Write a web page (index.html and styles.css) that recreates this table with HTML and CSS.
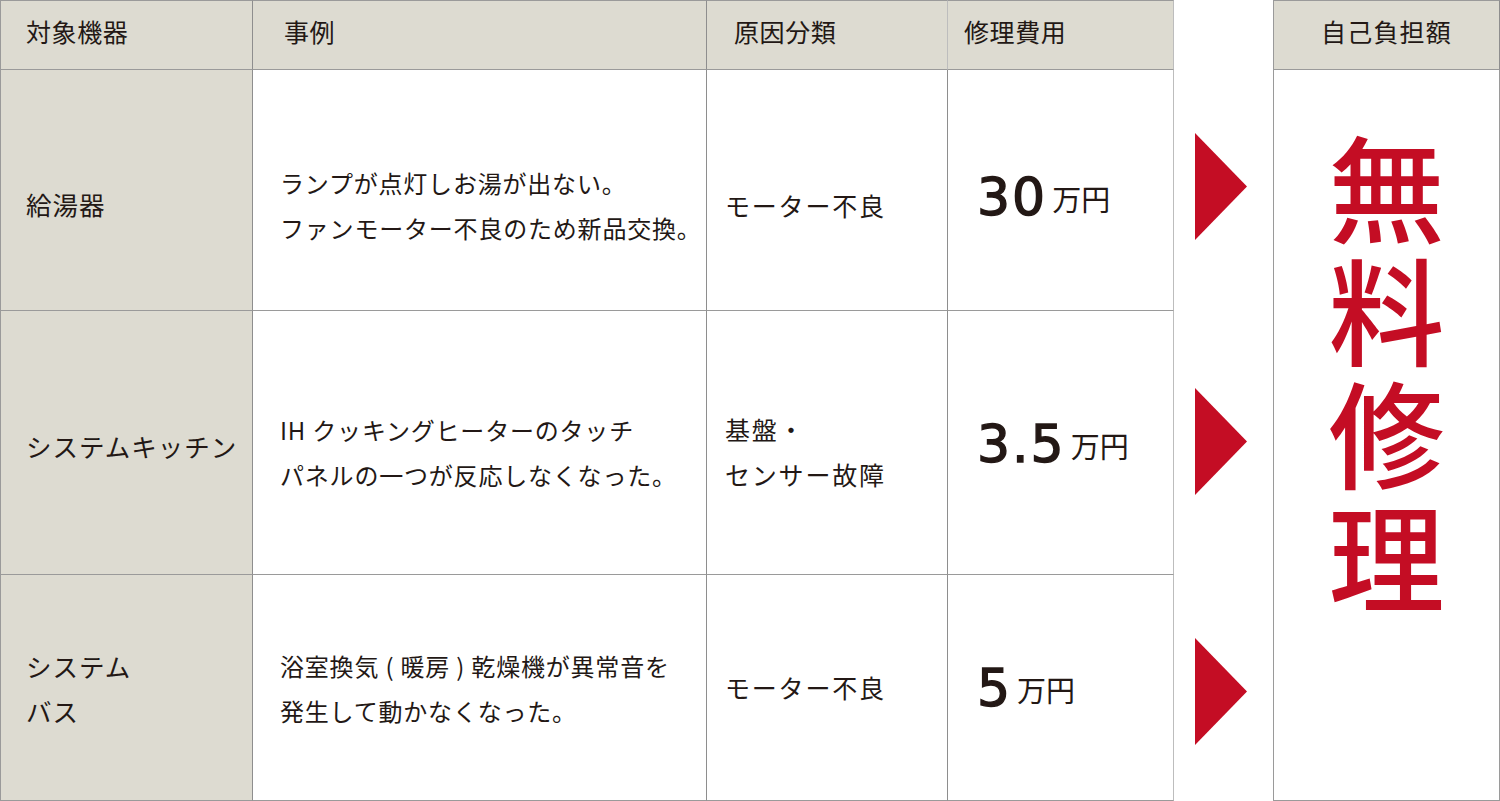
FILE: index.html
```html
<!DOCTYPE html>
<html lang="ja">
<head>
<meta charset="utf-8">
<title>修理事例</title>
<link rel="stylesheet" href="styles.css">
</head>
<body>
<div class="board">
  <div class="cell head c1 first top">対象機器</div>
  <div class="cell head c2 top">事例</div>
  <div class="cell head c3 top">原因分類</div>
  <div class="cell head c4 top light">修理費用</div>
  <div class="gapcol"></div>
  <div class="cell head pay top">自己負担額</div>

  <div class="cell item first r1">給湯器</div>
  <div class="cell desc r1"><p>ランプが点灯しお湯が出ない。</p><p>ファンモーター不良のため新品交換。</p></div>
  <div class="cell cause r1">モーター不良</div>
  <div class="cell cost light r1"><span class="num">30</span><span class="unit">万円</span></div>
  <div class="arrow r1"><svg width="52" height="107" viewBox="0 0 52 107"><polygon points="0,0 52,53.5 0,107" fill="#c40d24"/></svg></div>

  <div class="free"><div class="free-text">無<br>料<br>修<br>理</div></div>

  <div class="cell item first r2">システムキッチン</div>
  <div class="cell desc r2"><p>IH クッキングヒーターのタッチ</p><p>パネルの一つが反応しなくなった。</p></div>
  <div class="cell cause r2"><p>基盤・</p><p>センサー故障</p></div>
  <div class="cell cost light r2"><span class="num">3.5</span><span class="unit">万円</span></div>
  <div class="arrow r2"><svg width="52" height="107" viewBox="0 0 52 107"><polygon points="0,0 52,53.5 0,107" fill="#c40d24"/></svg></div>

  <div class="cell item first r3"><p>システム</p><p>バス</p></div>
  <div class="cell desc r3"><p>浴室換気 ( 暖房 ) 乾燥機が異常音を</p><p>発生して動かなくなった。</p></div>
  <div class="cell cause r3">モーター不良</div>
  <div class="cell cost light r3"><span class="num">5</span><span class="unit">万円</span></div>
  <div class="arrow r3"><svg width="52" height="107" viewBox="0 0 52 107"><polygon points="0,0 52,53.5 0,107" fill="#c40d24"/></svg></div>
</div>
</body>
</html>
```

FILE: styles.css
```css
html, body {
  margin: 0;
  padding: 0;
  background: #ffffff;
}
body {
  font-family: "Noto Sans CJK JP", "Noto Sans", sans-serif;
  color: #231815;
  width: 1500px;
  height: 801px;
  overflow: hidden;
}
p { margin: 0; white-space: nowrap; }

.board {
  display: grid;
  grid-template-columns: 253px 454px 241px 226px 99px 227px;
  grid-template-rows: 70px 241px 264px 226px;
}

.cell {
  box-sizing: border-box;
  border-right: 1px solid #8e8e8e;
  border-bottom: 1px solid #9a9a9a;
  display: flex;
  flex-direction: column;
  justify-content: center;
  white-space: nowrap;
}
.cell.first { border-left: 1px solid #9a9a9a; }
.cell.top { border-top: 1px solid #9a9a9a; }
.cell.light { border-right-color: #bdbdbd; }
.c3 { border-right-color: #bdbdbd; }

.head {
  background: #dddbd1;
  font-size: 25px;
  line-height: 30px;
  padding-bottom: 9px;
  letter-spacing: 0.6px;
}
.c1 { padding-left: 25px; }
.c2 { padding-left: 31px; }
.c3 { padding-left: 27px; }
.c4 { padding-left: 16px; }
.pay {
  border-left: 1px solid #9a9a9a;
  align-items: center;
  padding-left: 0;
  padding-right: 0;
  letter-spacing: 1.2px;
}

.item {
  background: #dddbd1;
  padding-left: 25px;
  font-size: 25.5px;
  line-height: 45px;
  letter-spacing: 1px;
}
.desc {
  padding-left: 27px;
  font-size: 24px;
  line-height: 45px;
  letter-spacing: 0.8px;
}
.cause {
  padding-left: 18px;
  font-size: 25px;
  line-height: 45px;
  letter-spacing: 1.8px;
}
.cost {
  flex-direction: row;
  align-items: center;
  justify-content: flex-start;
  padding-left: 29px;
}
.num {
  font-family: "DejaVu Sans", sans-serif;
  font-size: 52px;
  line-height: 50px;
  letter-spacing: 2px;
  color: #231815;
  -webkit-text-stroke: 1.4px #231815;
}
.unit {
  font-size: 29px;
  line-height: 30px;
  margin-left: 5px;
  padding-top: 2px;
}

.r1 { padding-top: 30px; }
.r1.cost { padding-top: 14px; }
.r1.item { padding-top: 26px; }
.r2 { padding-top: 18px; }
.r2.item { padding-top: 6px; }
.r2.cost { padding-top: 2px; }
.r3 { padding-top: 0; }

.arrow {
  display: flex;
  align-items: center;
  justify-content: center;
  padding-right: 6px;
  grid-column: 5;
}
.arrow.r1 { padding-top: 0; padding-bottom: 8px; }
.arrow.r2 { padding-top: 0; padding-bottom: 4px; }
.arrow.r3 { padding-top: 6px; }

.free {
  grid-column: 6;
  grid-row: 2 / span 3;
  box-sizing: border-box;
  border-left: 1px solid #9a9a9a;
  border-right: 1px solid #9a9a9a;
  border-bottom: 1px solid #9a9a9a;
  display: flex;
  flex-direction: column;
  align-items: center;
  padding-top: 52px;
}
.free-text {
  color: #c40d24;
  font-size: 116px;
  line-height: 123px;
  font-weight: 500;
  text-align: center;
}
```
